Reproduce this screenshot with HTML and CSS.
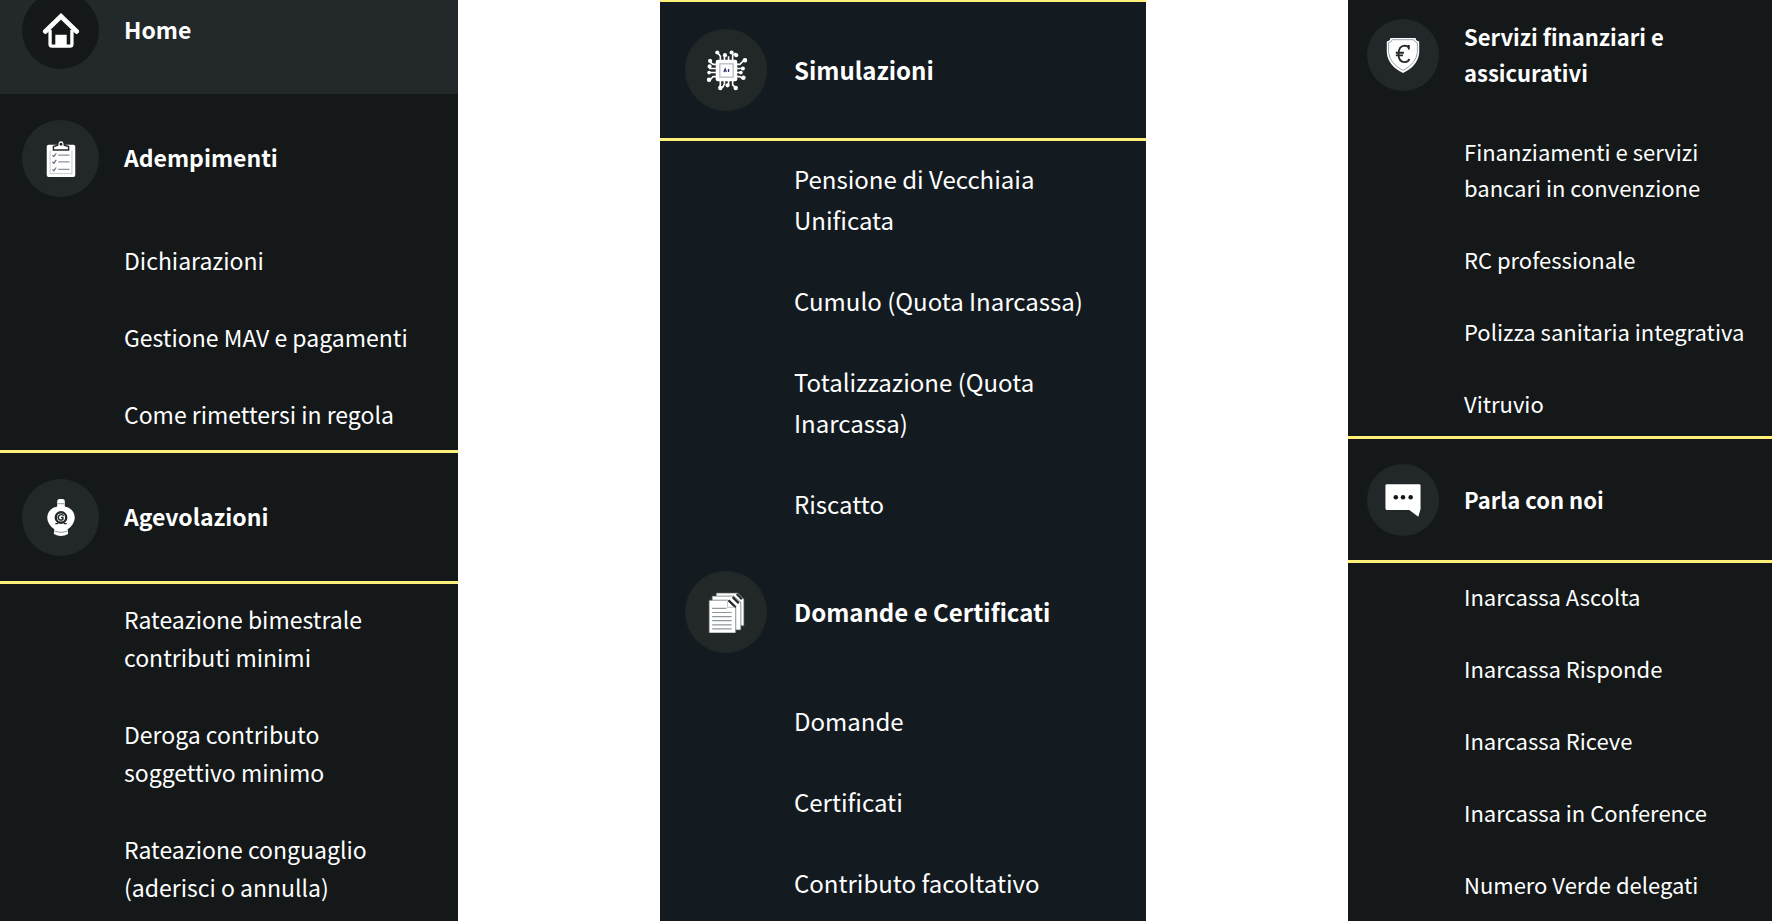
FILE: index.html
```html
<!DOCTYPE html>
<html lang="it">
<head>
  <meta charset="UTF-8" />
  <meta name="viewport" content="width=device-width, initial-scale=1" />
  <title>Inarcassa - Menu</title>
  <link rel="stylesheet" href="styles.css">
</head>
<body>
  <main class="menus">

    <!-- Adempimenti / Agevolazioni -->
    <nav class="menu menu-left" aria-label="Adempimenti e agevolazioni">
      <a href="#" class="menu-head active">
        <span class="icon">
          <svg viewBox="0 0 40 40">
            <path d="M3.500 21.500 20 5.500l16.500 16" fill="none" stroke="#fff" stroke-width="5" stroke-linecap="round"/>
            <path d="M8.500 20v15q0 2 2 2h19q2 0 2-2V20" fill="none" stroke="#fff" stroke-width="3.500"/>
            <path d="M14 25h12v13H14z" fill="#fff"/>
          </svg>
        </span>
        <span class="title">Home</span>
      </a>
      <a href="#" class="menu-head">
        <span class="icon">
          <svg viewBox="0 0 40 40">
            <rect x="5" y="6" width="30" height="34" rx="2" fill="#fff"/>
            <path d="M12 11.500V8l4.500-1.500a3.500 5 0 0 1 7 0L28 8v3.500z" fill="#fff" stroke="#22282a" stroke-width="1.500"/>
            <circle cx="20" cy="5.500" r="1.500" fill="#22282a"/>
            <path d="M8.500 12v24.500h23V12" fill="none" stroke="#c3c8ca" stroke-width="1"/>
            <path d="M17 17h12M17 24h12M17 32h12" stroke="#8b9598" stroke-width="1.300"/>
            <path d="m11 17 1.500 1.500L15 15m-4 9 1.500 1.500L15 22m-4 10 1.500 1.500L15 30" fill="none" stroke="#6e6a86" stroke-width="1.300"/>
          </svg>
        </span>
        <span class="title">Adempimenti</span>
      </a>
      <ul class="items">
        <li><a href="#">Dichiarazioni</a></li>
        <li><a href="#">Gestione MAV e pagamenti</a></li>
        <li><a href="#">Come rimettersi in regola</a></li>
      </ul>
      <a href="#" class="menu-head marked">
        <span class="icon">
          <svg viewBox="0 0 40 40">
            <path d="M16 4q0-3 2.500-3h3Q24 1 24 4v5q10 2 10.500 12-.5 7-7.500 12l.5 5q-7.500 4-15 0l.5-5Q6 28 5.500 21 6 11 16 9z" fill="#fff"/>
            <path d="M16.500 6h7M13.500 35q6.500 2.500 13 0" fill="none" stroke="#8b9295" stroke-width="1"/>
            <circle cx="20" cy="20.500" r="5.500" fill="#fff" stroke="#22282a" stroke-width="2.500"/>
            <path d="M23 18.500q-3-2-5 0t0 4q2 1.500 4 0v-2h-2M14 27h3m6 0h3" fill="none" stroke="#22282a" stroke-width="1.500"/>
          </svg>
        </span>
        <span class="title">Agevolazioni</span>
      </a>
      <ul class="items">
        <li><a href="#">Rateazione bimestrale contributi minimi</a></li>
        <li><a href="#">Deroga contributo soggettivo minimo</a></li>
        <li><a href="#">Rateazione conguaglio (aderisci o annulla)</a></li>
      </ul>
    </nav>

    <!-- Simulazioni / Domande -->
    <nav class="menu menu-center" aria-label="Simulazioni e domande">
      <a href="#" class="menu-head marked">
        <span class="icon">
          <svg viewBox="0 0 40 40">
            <g fill="none" stroke="#fff" stroke-width="1.600">
              <path d="M14 10V6l-3-4M18 10V6M22 10V6M26 10V5l3-2M14 30v4l-1 3M18 30v3l-2 4M22 30v4M26 30v4l3 3"/>
              <path d="M10 14H7l-4-3M10 18H3M10 22H4M10 26H7l-4 4M30 14h3l4-4M30 18h4M30 22h5M30 26h3l3 2"/>
            </g>
            <g fill="#fff">
              <circle cx="11" cy="2.500" r="2"/><circle cx="18.500" cy="5" r="2"/><circle cx="25" cy="2.500" r="2"/><circle cx="29.500" cy="5" r="2"/>
              <circle cx="14" cy="37" r="2.200"/><circle cx="21" cy="34.500" r="2"/><circle cx="29" cy="37" r="2.200"/>
              <circle cx="3.500" cy="16" r="2"/><circle cx="4" cy="10.500" r="2"/><circle cx="3" cy="22" r="1.800"/><circle cx="3" cy="29" r="2.200"/>
              <circle cx="38" cy="10" r="2.200"/><circle cx="36" cy="18" r="2"/><circle cx="36.500" cy="27" r="2.200"/><circle cx="34" cy="22" r="1.800"/>
              <rect x="9.500" y="9.500" width="21" height="21" rx="2"/>
            </g>
            <rect x="13.500" y="13.500" width="13" height="13" fill="none" stroke="#b4b5c0" stroke-width="1.200"/>
            <path d="m17.500 21.500 1.200-3 1.200 3M22 18.500v3" fill="none" stroke="#34346a" stroke-width="1.300"/>
          </svg>
        </span>
        <span class="title">Simulazioni</span>
      </a>
      <ul class="items">
        <li><a href="#">Pensione di Vecchiaia Unificata</a></li>
        <li><a href="#">Cumulo (Quota Inarcassa)</a></li>
        <li><a href="#">Totalizzazione (Quota Inarcassa)</a></li>
        <li><a href="#">Riscatto</a></li>
      </ul>
      <a href="#" class="menu-head">
        <span class="icon">
          <svg viewBox="0 0 40 40">
            <g fill="#fff" stroke="#5b6365" stroke-width=".7">
              <path d="M10 1h21l6 6v26H10z"/>
              <path d="M6 4h21l7 6v27H6z"/>
              <path d="M3 8h18l8 7v25H3z"/>
            </g>
            <path d="m22 8 7 7M26 5l6 6M30 2l5 5" stroke="#22282a" stroke-width="2.200"/>
            <path d="M21 8v7h7" fill="none" stroke="#c9ccce" stroke-width="1"/>
            <path d="M6 16h14M6 20h19M6 24h19M6 28h19M6 32h19M6 36h19" stroke="#8d9899" stroke-width="1.200"/>
          </svg>
        </span>
        <span class="title">Domande e Certificati</span>
      </a>
      <ul class="items">
        <li><a href="#">Domande</a></li>
        <li><a href="#">Certificati</a></li>
        <li><a href="#">Contributo facoltativo</a></li>
      </ul>
    </nav>

    <!-- Servizi / Contatti -->
    <nav class="menu menu-right" aria-label="Servizi e contatti">
      <a href="#" class="menu-head">
        <span class="icon">
          <svg viewBox="0 0 40 40">
            <path d="M6 1h28q0 3 4 4v12q-1 15-18 23Q3 32 2 17V5q4-1 4-4z" fill="#fff"/>
            <path d="M8 3h24q1 3 4 3.500V17q-1.500 13-16 20Q5.500 30 4 17V6.500Q7 6 8 3z" fill="none" stroke="#8f98ae" stroke-width="1"/>
            <path d="M26.500 12.500q-1-3-4.500-3-7 .5-7 9.500t7 9q4 0 5-3.500M12 17.500h9M12 20.500h8M26.500 9v5" fill="none" stroke="#22282a" stroke-width="2"/>
          </svg>
        </span>
        <span class="title">Servizi finanziari e assicurativi</span>
      </a>
      <ul class="items">
        <li><a href="#">Finanziamenti e servizi bancari in convenzione</a></li>
        <li><a href="#">RC professionale</a></li>
        <li><a href="#">Polizza sanitaria integrativa</a></li>
        <li><a href="#">Vitruvio</a></li>
      </ul>
      <a href="#" class="menu-head marked">
        <span class="icon">
          <svg viewBox="0 0 40 40">
            <path d="M2 2.500h36q1.500 0 1.500 1.500v26L37 38.500 27 31H2Q.5 31 .5 29.500V4Q.5 2.500 2 2.500z" fill="#fff"/>
            <g fill="#141819"><circle cx="12" cy="17" r="2.500"/><circle cx="20" cy="17" r="2.500"/><circle cx="28.500" cy="17" r="2.500"/></g>
          </svg>
        </span>
        <span class="title">Parla con noi</span>
      </a>
      <ul class="items">
        <li><a href="#">Inarcassa Ascolta</a></li>
        <li><a href="#">Inarcassa Risponde</a></li>
        <li><a href="#">Inarcassa Riceve</a></li>
        <li><a href="#">Inarcassa in Conference</a></li>
        <li><a href="#">Numero Verde delegati</a></li>
      </ul>
    </nav>

  </main>
</body>
</html>
```

FILE: styles.css
```css
* { box-sizing: border-box; margin: 0; padding: 0; }
body {
  background: #fff;
  font-family: "Noto Sans CJK JP", "Open Sans", sans-serif;
  color: #fff;
}
.menus {
  display: grid;
  grid-template-columns: 458fr 486fr 424fr;
  gap: 202px;
  height: 100vh;
}
.menu {
  background: var(--bg);
  overflow: hidden;
  font-size: var(--text);
  line-height: var(--line);
}

/* one scale per menu */
.menu-left {
  --bg: #141819; --circle: #22282a;
  --text: 23px; --line: 38px; --pad: 19px 0 20px;
  --head: 128px; --disc: 77px; --glyph: 38px;
  --edge: 22px; --gap: 25px; --start: -34px;
}
.menu-center {
  --bg: #141b20; --circle: #222828;
  --text: 24px; --line: 41px; --pad: 20px 0;
  --head: 136px; --disc: 82px; --glyph: 41px;
  --edge: 25px; --gap: 27px; --start: 2px;
}
.menu-right {
  --bg: #141819; --circle: #22282a;
  --text: 22px; --line: 36px; --pad: 18px 0;
  --head: 121px; --disc: 72px; --glyph: 36px;
  --edge: 19px; --gap: 25px; --start: -6px;
}

.menu a {
  color: inherit;
  text-decoration: none;
}
.menu-head {
  display: flex;
  align-items: center;
  gap: var(--gap);
  height: var(--head);
  padding: 0 24px 0 var(--edge);
  font-weight: 700;
}
.menu-head:first-child { margin-top: var(--start); }
.menu-head.active { background: #23292b; }
.menu-head.active .icon { background: #141819; }

/* yellow rules above and below the highlighted section */
.menu-head.marked { box-shadow: 0 -3px #fff07a, 0 3px #fff07a; background: var(--bg); }

.icon {
  display: flex;
  align-items: center;
  justify-content: center;
  flex: none;
  width: var(--disc);
  height: var(--disc);
  border-radius: 50%;
  background: var(--circle);
}
.icon svg {
  width: var(--glyph);
  height: var(--glyph);
}
.title { padding-bottom: 2px; }
.items {
  list-style: none;
  padding-left: calc(var(--edge) + var(--disc) + var(--gap));
  padding-right: 24px;
}
.items a {
  display: block;
  padding: var(--pad);
}
```
